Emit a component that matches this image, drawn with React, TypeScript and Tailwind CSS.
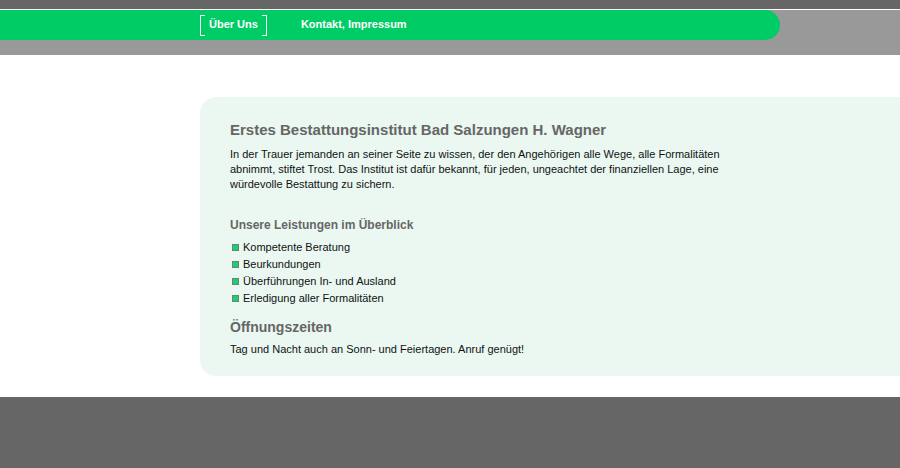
import React from "react";

const items = [
  "Kompetente Beratung",
  "Beurkundungen",
  "Überführungen In- und Ausland",
  "Erledigung aller Formalitäten",
];

function Bullet() {
  return (
    <span className="inline-block w-[7px] h-[7px] border border-[#5f8a74] bg-[#22cc6e] mr-[4px] shrink-0" />
  );
}

export default function App() {
  return (
    <div className="min-h-[468px] flex flex-col bg-white" style={{ fontFamily: '"Liberation Sans", Arial, sans-serif' }}>
      <header>
        <div className="h-[9px] bg-[#666666]" />
        <div className="h-px bg-white" />
        <div className="h-[45px] bg-[#999999]">
          <nav className="h-[30px] w-[780px] bg-[#00cc66] rounded-r-[15px] flex items-center pl-[200px]">
            <a className="relative text-white font-bold text-[11px] leading-none px-[8px] pb-[2px] border-l border-r border-white h-[21px] flex items-center">
              <span className="absolute left-0 top-0 w-[4px] h-px bg-white" />
              <span className="absolute left-0 bottom-0 w-[4px] h-px bg-white" />
              <span className="absolute right-0 top-0 w-[4px] h-px bg-white" />
              <span className="absolute right-0 bottom-0 w-[4px] h-px bg-white" />
              Über Uns
            </a>
            <a className="text-white font-bold text-[11px] leading-none ml-[34px] pb-[2px]">Kontakt, Impressum</a>
          </nav>
        </div>
      </header>
      <main className="pt-[42px] pb-[21px]">
        <section className="ml-[200px] rounded-l-[16px] bg-[#eaf8f1] pl-[30px] pr-[170px] pt-[24px] pb-[20px] h-[279px]">
          <h1 className="text-[15px] font-bold text-[#666666] leading-[18px] mb-[8px]">
            Erstes Bestattungsinstitut Bad Salzungen H. Wagner
          </h1>
          <p className="text-[11px] leading-[15px] text-[#111111]">
            In der Trauer jemanden an seiner Seite zu wissen, der den Angehörigen alle Wege, alle Formalitäten abnimmt, stiftet Trost. Das Institut ist dafür bekannt, für jeden, ungeachtet der finanziellen Lage, eine würdevolle Bestattung zu sichern.
          </p>
          <h2 className="text-[12px] font-bold text-[#666666] leading-[15px] mt-[26px] mb-[6px]">
            Unsere Leistungen im Überblick
          </h2>
          <ul className="text-[11px] text-[#111111]">
            {items.map((t) => (
              <li key={t} className="flex items-center h-[17px] pl-[2px]">
                <Bullet />
                {t}
              </li>
            ))}
          </ul>
          <h2 className="text-[14px] font-bold text-[#666666] leading-[18px] mt-[11px] mb-[6px]">
            Öffnungszeiten
          </h2>
          <p className="text-[11px] leading-[15px] text-[#111111]">
            Tag und Nacht auch an Sonn- und Feiertagen. Anruf genügt!
          </p>
        </section>
      </main>
      <footer className="flex-1 bg-[#666666]" />
    </div>
  );
}
